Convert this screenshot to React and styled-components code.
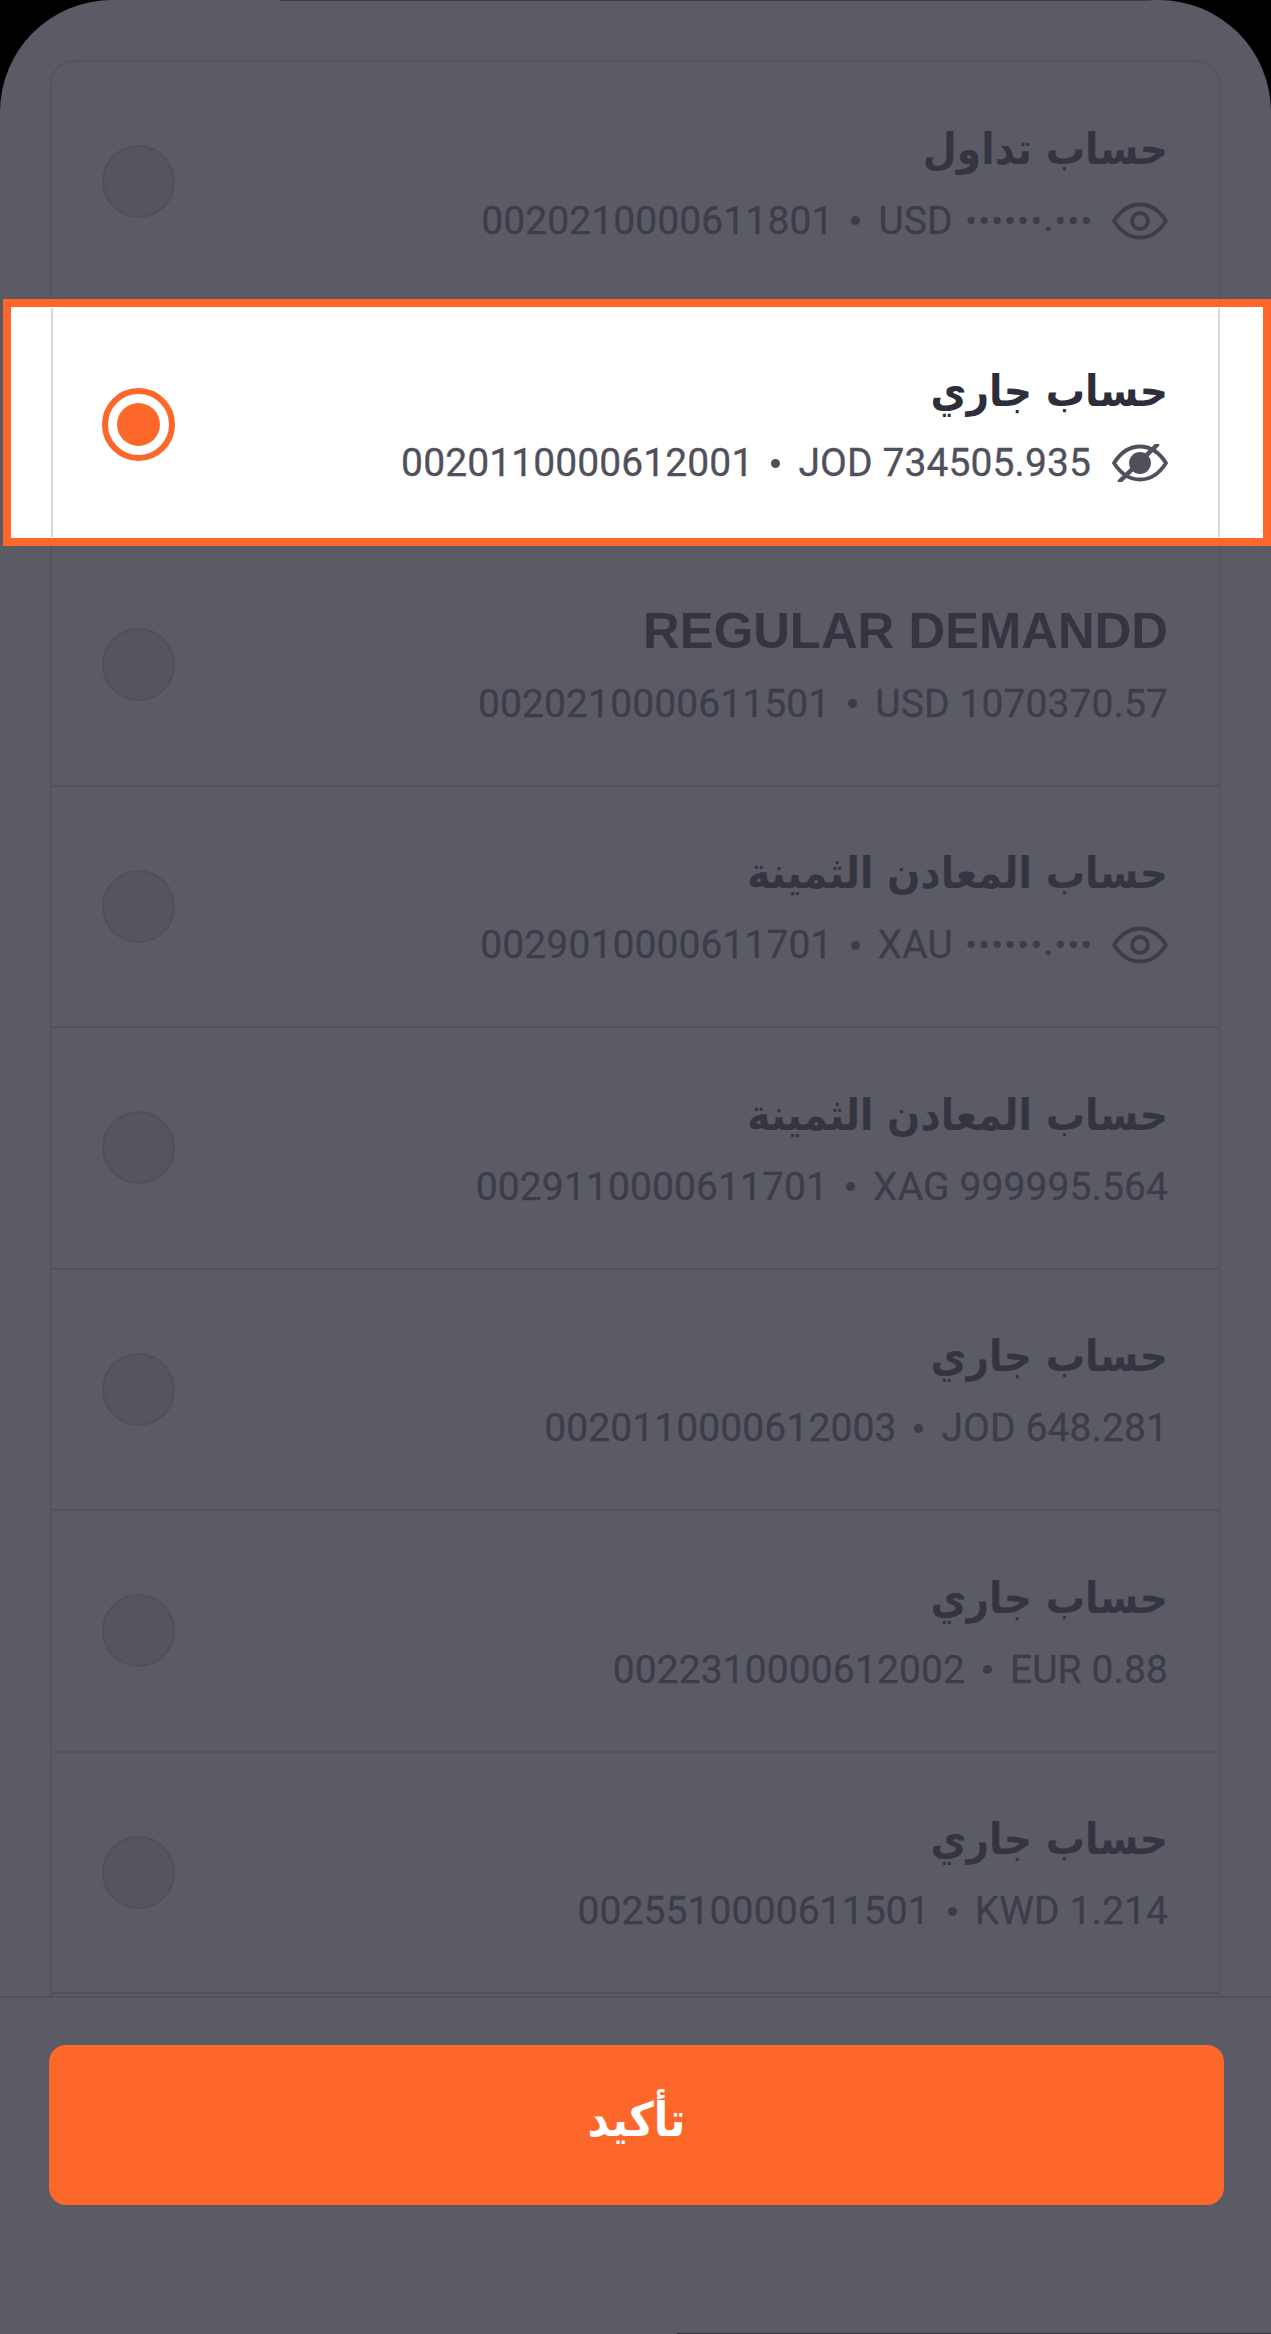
import React from "react";
import styled, { createGlobalStyle } from "styled-components";

const ORANGE = "#fd6729";

const GlobalStyle = createGlobalStyle`
  html, body {
    margin: 0;
    padding: 0;
    background: #000;
  }
`;

const Screen = styled.div`
  width: 1271px;
  height: 2334px;
  overflow: hidden;
  background: #000;
`;

const Sheet = styled.div`
  position: relative;
  height: 100%;
  display: flex;
  flex-direction: column;
  background: #5b5b66;
  border-radius: 112px 112px 0 0;
  padding-top: 60px;
  box-sizing: border-box;

  /* thin dark slivers left over at the top and bottom edge */
  &::before {
    content: "";
    position: absolute;
    top: 0;
    left: 280px;
    right: 120px;
    height: 1px;
    background: #3d3d45;
  }
  &::after {
    content: "";
    position: absolute;
    bottom: 0;
    left: 677px;
    right: 0;
    height: 1px;
    background: #2e2e33;
  }
`;

const List = styled.div`
  margin: 0 50px;
  height: 1936px;
  box-sizing: border-box;
  border: 2px solid #555560;
  border-bottom: 0;
  border-radius: 24px 24px 0 0;
  display: flex;
  flex-direction: column;
`;

const Row = styled.div`
  position: relative;
  height: 241.5px;
  flex: none;
  box-sizing: border-box;
  display: flex;
  align-items: center;
  justify-content: space-between;
  padding: 0 51px 0 50px;
  border-bottom: ${(p) => (p.$selected ? "0" : "2px solid #52525d")};

  ${(p) =>
    p.$selected &&
    `
    &::before {
      content: "";
      position: absolute;
      left: -49px;
      right: -52px;
      top: -5px;
      bottom: -1px;
      background: #fff;
      border: 8.5px solid ${ORANGE};
    }
    &::after {
      content: "";
      position: absolute;
      left: -1px;
      right: -1px;
      top: 4px;
      bottom: 8px;
      border-left: 2px solid #d9d9dc;
      border-right: 2px solid #d9d9dc;
    }
  `}
`;

const Radio = styled.div`
  position: relative;
  z-index: 1;
  width: 73px;
  height: 73px;
  flex: none;
  box-sizing: border-box;
  border-radius: 50%;
  display: flex;
  align-items: center;
  justify-content: center;
  background: ${(p) => (p.$selected ? "#fff" : "#555560")};
  border: ${(p) => (p.$selected ? `6px solid ${ORANGE}` : "2px solid #50505b")};
`;

const RadioDot = styled.div`
  width: 43px;
  height: 43px;
  border-radius: 50%;
  background: ${ORANGE};
`;

const Info = styled.div`
  position: relative;
  z-index: 1;
  display: flex;
  flex-direction: column;
  align-items: flex-end;
  gap: 14px;
`;

const Title = styled.div`
  font-family: ${(p) => (p.$latin ? '"Liberation Sans"' : '"DejaVu Sans"')}, sans-serif;
  font-stretch: ${(p) => (p.$latin ? "normal" : "condensed")};
  font-weight: 700;
  font-size: ${(p) => (p.$latin ? "50.8px" : "43.6px")};
  line-height: ${(p) => (p.$latin ? "48px" : "50px")};
  height: 64px;
  color: ${(p) => (p.$selected ? "#2e2e3b" : "#353541")};
  white-space: nowrap;
`;

const Meta = styled.div`
  display: flex;
  align-items: center;
  height: 38px;
  font-family: Roboto, sans-serif;
  font-size: 39px;
  letter-spacing: 0.1px;
  line-height: 38px;
  color: ${(p) => (p.$selected ? "#50505c" : "#3d3d49")};
  -webkit-text-stroke: 0.3px currentColor;
  white-space: nowrap;
  direction: ltr;
`;

const Sep = styled.span`
  width: 9px;
  height: 9px;
  margin: 0 18px;
  border-radius: 50%;
  background: currentColor;
`;

const Mask = styled.span`
  margin: 0 -3px 0 13px;
  font-size: 29px;
  font-weight: 700;
  letter-spacing: 2.6px;
`;

const EyeSlot = styled.svg`
  width: 56px;
  height: 38px;
  margin-left: 21px;
  flex: none;
`;

const Footer = styled.div`
  flex: 1;
  border-top: 2px solid #52525d;
  padding: 47px 47px 0 49px;
`;

const ConfirmButton = styled.button`
  display: block;
  width: 100%;
  height: 160px;
  padding: 0 0 12px;
  border: 0;
  border-radius: 17px;
  background: ${ORANGE};
  color: #fff;
  font-family: "DejaVu Sans", sans-serif;
  font-stretch: condensed;
  font-weight: 700;
  font-size: 47px;
`;

const accounts = [
  { title: "حساب تداول", number: "0020210000611801", currency: "USD", eye: "open" },
  { title: "حساب جاري", number: "0020110000612001", currency: "JOD", amount: "734505.935", eye: "off", selected: true },
  { title: "REGULAR DEMANDD", latin: true, number: "0020210000611501", currency: "USD", amount: "1070370.57" },
  { title: "حساب المعادن الثمينة", number: "0029010000611701", currency: "XAU", eye: "open" },
  { title: "حساب المعادن الثمينة", number: "0029110000611701", currency: "XAG", amount: "999995.564" },
  { title: "حساب جاري", number: "0020110000612003", currency: "JOD", amount: "648.281" },
  { title: "حساب جاري", number: "0022310000612002", currency: "EUR", amount: "0.88" },
  { title: "حساب جاري", number: "0025510000611501", currency: "KWD", amount: "1.214" },
];

const EyeIcon = ({ off }) => (
  <EyeSlot viewBox="0 0 56 38" fill="none" stroke="currentColor" strokeWidth="3.8" strokeLinecap="round" strokeLinejoin="round">
    <path d="M2 19 C9 8 18 2.5 28 2.5 C38 2.5 47 8 54 19 C47 30 38 35.5 28 35.5 C18 35.5 9 30 2 19 Z" />
    {off ? (
      <>
        <circle cx="28" cy="19" r="9" fill="currentColor" />
        <path d="M8 37 L45 1" strokeWidth="4.5" />
      </>
    ) : (
      <circle cx="28" cy="19" r="8" />
    )}
  </EyeSlot>
);

export default function App() {
  return (
    <Screen>
      <GlobalStyle />
      <Sheet>
        <List>
          {accounts.map((a) => (
            <Row key={a.number} $selected={a.selected}>
              <Radio $selected={a.selected}>{a.selected && <RadioDot />}</Radio>
              <Info>
                <Title $latin={a.latin} $selected={a.selected} dir={a.latin ? "ltr" : "rtl"}>
                  {a.title}
                </Title>
                <Meta $selected={a.selected}>
                  {a.number}
                  <Sep />
                  {a.currency}
                  {a.amount ? <span>&nbsp;{a.amount}</span> : <Mask>••••••.•••</Mask>}
                  {a.eye && <EyeIcon off={a.eye === "off"} />}
                </Meta>
              </Info>
            </Row>
          ))}
        </List>
        <Footer>
          <ConfirmButton>تأكيد</ConfirmButton>
        </Footer>
      </Sheet>
    </Screen>
  );
}
